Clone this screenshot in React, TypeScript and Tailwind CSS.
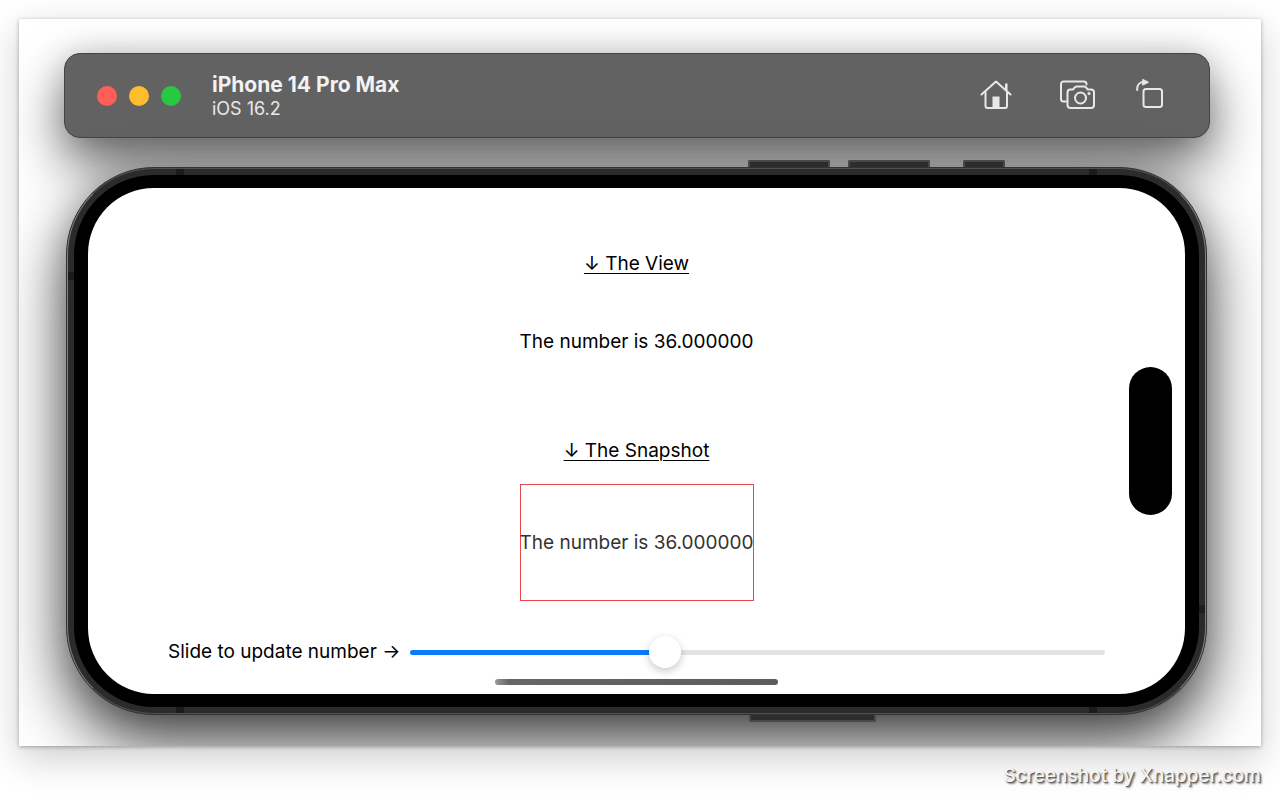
import React, { useState } from 'react';

const windowButtons = [
  { label: 'Close', color: 'bg-[#ff5f57]' },
  { label: 'Minimize', color: 'bg-[#febc2e]' },
  { label: 'Zoom', color: 'bg-[#28c840]' },
];

function HomeIcon() {
  return (
    <svg width="32" height="32" viewBox="0 0 32 32" fill="none" stroke="currentColor" strokeWidth="2" strokeLinecap="round" strokeLinejoin="round">
      <path d="M1.5 15.5 16 2.500 30.500 15.500" />
      <path d="M5.500 13v14a2 2 0 0 0 2 2H25a2 2 0 0 0 2-2V13" />
      <path d="M26.300 5.500v5" strokeWidth="2.6" />
      <path d="M12.500 17.500h7V29h-7z" fill="currentColor" stroke="none" />
    </svg>
  );
}

function CameraIcon() {
  return (
    <svg width="36" height="32" viewBox="0 0 36 32" fill="none" stroke="currentColor" strokeWidth="2" strokeLinecap="round" strokeLinejoin="round">
      <path d="M6 22.500H3.500a2.500 2.500 0 0 1-2.500-2.500V5a2.500 2.500 0 0 1 2.500-2.500H24A2.500 2.500 0 0 1 26.500 5v.5" />
      <path d="M10.500 10.500H13l1.800-2.200a2.400 2.400 0 0 1 1.900-.9h7.400a2.400 2.400 0 0 1 1.900.9l1.800 2.200h3.200a3 3 0 0 1 3 3V26a3 3 0 0 1-3 3H10.500a3 3 0 0 1-3-3V13.500a3 3 0 0 1 3-3z" />
      <circle cx="20.5" cy="19" r="5.5" />
      <circle cx="29" cy="14.5" r="1.5" fill="currentColor" stroke="none" />
    </svg>
  );
}

function RotateIcon() {
  return (
    <svg width="28" height="32" viewBox="0 0 28 32" fill="none" stroke="currentColor" strokeWidth="2" strokeLinecap="round" strokeLinejoin="round">
      <rect x="7.5" y="10" width="18.5" height="18" rx="2.5" />
      <path d="M1.2 11V9.500A6.500 6.500 0 0 1 7 3" />
      <path d="M7 .5 12.500 3.200 7 6z" fill="currentColor" strokeWidth="1" />
    </svg>
  );
}

function TitleBar() {
  return (
    <header className="flex h-[85px] items-center rounded-2xl border border-[#444] bg-[#626262] pr-[45px] pl-8 text-[#e8e8e8] shadow-[0_26px_54px_rgba(0,0,0,0.6),0_0_30px_rgba(0,0,0,0.15)]">
      <div className="flex gap-3">
        {windowButtons.map((button) => (
          <button key={button.label} aria-label={button.label} className={`size-5 rounded-full ${button.color}`} />
        ))}
      </div>
      <div className="ml-[31px] flex-1 pt-0.5">
        <h1 className="text-[21px] leading-6 font-bold text-[#f2f2f2]">iPhone 14 Pro Max</h1>
        <p className="text-lg leading-6">iOS 16.2</p>
      </div>
      <div className="flex items-center pb-0.5">
        <button aria-label="Home" className="mr-12"><HomeIcon /></button>
        <button aria-label="Screenshot" className="mr-10"><CameraIcon /></button>
        <button aria-label="Rotate"><RotateIcon /></button>
      </div>
    </header>
  );
}

function Demo() {
  const [value, setValue] = useState(36);
  const text = `The number is ${value.toFixed(6)}`;

  return (
    <main className="relative flex flex-col items-center overflow-hidden rounded-[66px] bg-white px-20 pt-16 pb-[9px] text-[19px] leading-6 text-black">
      <h2 className="underline decoration-1 underline-offset-3">↓ The View</h2>
      <p className="mt-[7px] flex h-[117px] items-center">{text}</p>
      <h2 className="mt-[39px] underline decoration-1 underline-offset-3">↓ The Snapshot</h2>
      <p className="mt-[21px] flex h-[117px] items-center inset-ring inset-ring-[#e5484a] text-[#333]">{text}</p>
      <div className="mt-[35px] flex h-8 w-full items-center gap-2.5">
        <label htmlFor="number">Slide to update number →</label>
        <input
          id="number"
          type="range"
          min={0}
          max={100}
          value={value}
          onChange={(e) => setValue(Number(e.target.value))}
          style={{ backgroundImage: `linear-gradient(to right, #0a7aff ${value}%, #e4e4e5 ${value}%)` }}
          className="h-[5px] min-w-0 flex-1 appearance-none rounded-full [&::-webkit-slider-thumb]:size-8 [&::-webkit-slider-thumb]:appearance-none [&::-webkit-slider-thumb]:rounded-full [&::-webkit-slider-thumb]:bg-white [&::-webkit-slider-thumb]:shadow-[0_3px_8px_rgba(0,0,0,0.22)]"
        />
      </div>
      <div className="mt-[11px] h-1.5 w-[283px] rounded-full bg-linear-to-r from-[#999] via-[#666] via-5% to-[#5c5c5c]" />
      <div className="absolute top-1/2 right-[13px] h-[148px] w-[43px] -translate-y-1/2 rounded-full bg-black" />
    </main>
  );
}

function Phone() {
  return (
    <div className="pr-[3px] pl-0.5">
      <div className="relative z-10 mt-[22px] flex h-[7px] justify-end pr-[202px]">
        <div className="mr-[18px] w-[82px] rounded-t-xs border-2 border-b-0 border-[#484848] bg-[#2c2c2c]" />
        <div className="mr-[33px] w-[82px] rounded-t-xs border-2 border-b-0 border-[#484848] bg-[#2c2c2c]" />
        <div className="w-[42px] rounded-t-xs border-2 border-b-0 border-[#484848] bg-[#2c2c2c]" />
      </div>
      <div className="relative rounded-[88px] border border-[#333] bg-[#2b2b2b] shadow-[0_28px_64px_rgba(0,0,0,0.75),0_0_30px_rgba(0,0,0,0.15)]">
        {/* antenna bands */}
        <div className="absolute inset-y-0 left-[109px] w-2 bg-[#1c1c1c]" />
        <div className="absolute inset-y-0 right-[109px] w-2 bg-[#1c1c1c]" />
        <div className="absolute top-[104px] left-0 h-2 w-2 bg-[#1c1c1c]" />
        <div className="absolute right-0 bottom-[101px] h-2 w-2 bg-[#1c1c1c]" />
        <div className="relative rounded-[87px] border border-[#808080] border-y-[#505050] p-1.5">
          <div className="rounded-[80px] bg-black px-3.5 py-[13px]">
            <Demo />
          </div>
        </div>
      </div>
      <div className="relative z-10 flex h-[7px] justify-end pr-[331px]">
        <div className="w-[127px] rounded-b-xs border-2 border-t-0 border-[#484848] bg-[#2c2c2c]" />
      </div>
    </div>
  );
}

export default function App() {
  return (
    <div className="min-h-screen bg-white px-[19px] pt-[19px] font-['Inter',sans-serif]">
      <div className="overflow-hidden bg-white pt-[34px] pr-[51px] pb-6 pl-[45px] shadow-[0_1px_4px_rgba(0,0,0,0.3),0_12px_36px_rgba(0,0,0,0.2)]">
        <TitleBar />
        <Phone />
      </div>
      <footer className="py-[18px] text-right text-[19px] leading-6 font-medium text-[#f4f4f4] [text-shadow:1px_1px_1px_#555,2px_2px_2px_#888]">
        Screenshot by Xnapper.com
      </footer>
    </div>
  );
}
